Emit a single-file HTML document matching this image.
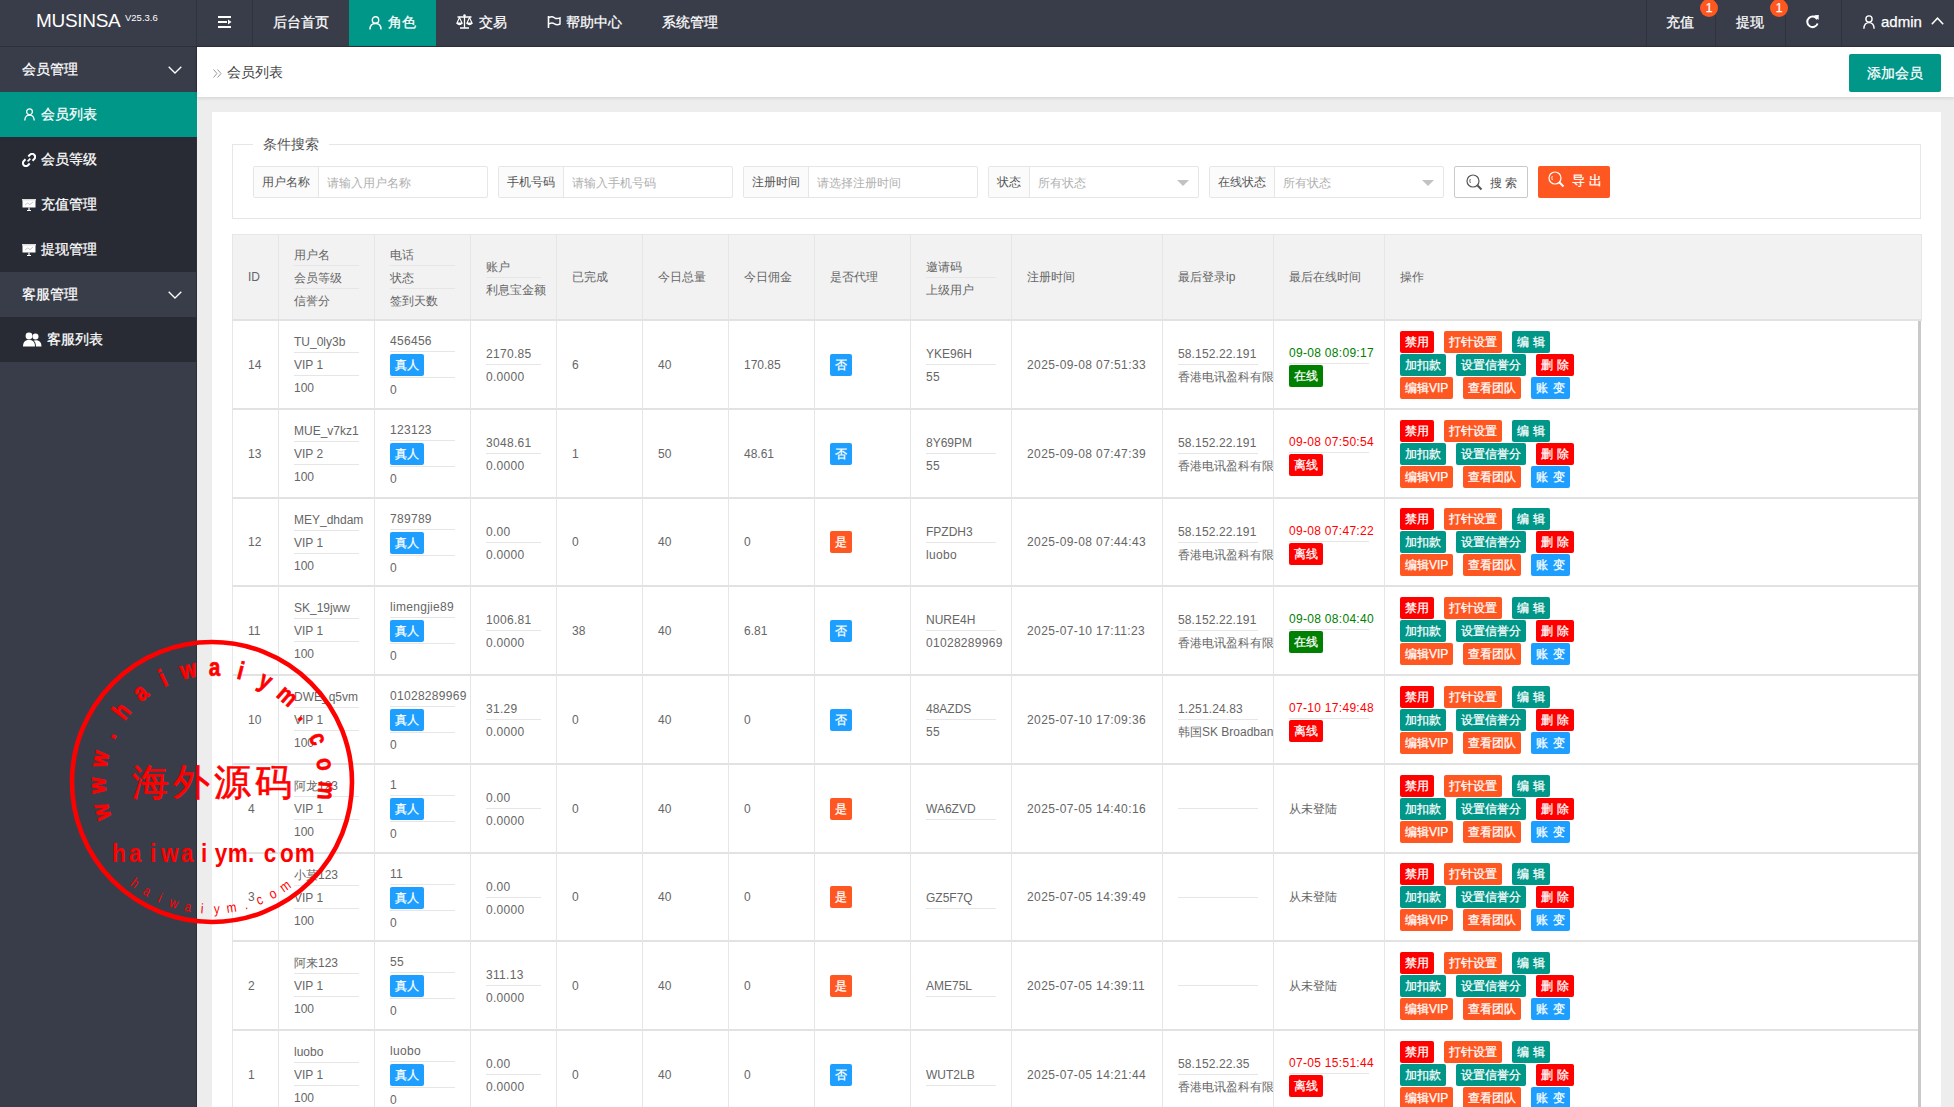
<!DOCTYPE html>
<html><head><meta charset="utf-8"><title>会员列表</title>
<style>
*{margin:0;padding:0;box-sizing:border-box}
html,body{width:1954px;height:1107px;overflow:hidden}
body{position:relative;background:#ededed;font-family:"Liberation Sans",sans-serif;color:#666;font-size:12px}
i{font-style:normal}
.hd{position:absolute;left:0;top:0;width:1954px;height:47px;background:#393d49;border-bottom:1px solid #2d3039}
.logo{position:absolute;left:0;top:0;width:197px;height:46px;border-right:1px solid #30333c;color:#fff}
.logo .t{position:absolute;left:36px;top:10px;font-size:19px;line-height:22px;letter-spacing:-0.3px}
.logo .v{position:absolute;left:125px;top:12px;font-size:9.5px;line-height:12px}
.nv{position:absolute;top:0;height:46px;color:#fff;font-size:14px;line-height:46px;white-space:nowrap}
.nv svg{position:absolute}
.nv .tx{position:absolute;top:-1px}
.sep{position:absolute;top:0;width:1px;height:46px;background:#30333c}
.badge{position:absolute;width:18px;height:18px;border-radius:9px;background:#ff5722;color:#fff;font-size:12px;line-height:18px;text-align:center}
.side{position:absolute;left:0;top:47px;width:197px;height:1060px;background:#393d49;border-right:1px solid #2d3039}
.si{position:absolute;left:0;width:196px;height:45px;color:#fff;font-size:14px;line-height:45px}
.si.g{background:#393d49}
.si.c{background:#282b33}
.si.on{background:#009688;width:197px}
.si svg{position:absolute}
.si .tx{position:absolute;top:0}
.crumb{position:absolute;left:197px;top:47px;width:1757px;height:50px;background:#fff;box-shadow:0 1px 4px rgba(0,0,0,.12)}
.crumb .tx{position:absolute;left:30px;top:0;line-height:50px;font-size:14px;color:#444}
.addbtn{position:absolute;left:1849px;top:54px;width:92px;height:38px;background:#009688;color:#fff;font-size:14px;line-height:38px;text-align:center;border-radius:2px}
.card{position:absolute;left:212px;top:112px;width:1729px;height:1000px;background:#fff}
.fs{position:absolute;left:232px;top:144px;width:1689px;height:75px;border:1px solid #e6e6e6}
.lg{position:absolute;left:253px;top:135px;padding:0 10px;background:#fff;font-size:14px;line-height:18px;color:#555}
.ig{position:absolute;top:166px;height:32px;border:1px solid #e6e6e6;border-radius:2px;background:#fff}
.ig .lb{position:absolute;left:0;top:0;height:30px;background:#fbfbfb;border-right:1px solid #e6e6e6;color:#555;font-size:12px;line-height:31px;padding-left:8px}
.ig .ph{position:absolute;top:1px;color:#b0b0b0;font-size:12px;line-height:30px}
.ig .arr{position:absolute;top:13px;width:0;height:0;border-left:6px solid transparent;border-right:6px solid transparent;border-top:6px solid #c2c2c2}
.sbtn{position:absolute;left:1454px;top:166px;width:74px;height:32px;border:1px solid #c9c9c9;border-radius:2px;background:#fff;color:#555;font-size:12px;line-height:30px}
.ebtn{position:absolute;left:1538px;top:166px;width:72px;height:32px;border-radius:2px;background:#ff5722;color:#fff;font-size:12px;line-height:30px}
table{position:absolute;left:232px;top:234px;width:1690px;border-collapse:separate;border-spacing:0;table-layout:fixed;border-top:1px solid #e6e6e6}
th,td{border-left:1px solid #e6e6e6;border-bottom:2px solid #e2e2e2;padding:0 15px;text-align:left;vertical-align:middle;font-weight:normal;color:#666;font-size:12px;line-height:22px;white-space:nowrap;overflow:hidden}
th{background:#f2f2f2;height:86px}
th.last{border-right:1px solid #e6e6e6}
td{height:auto;background:#fff}
td.last{border-right:none}
p{line-height:22px;height:22px;padding-top:1px}
p.s{border-bottom:1px solid #e6e6e6;height:23px}
p.t{height:23px}
p.e{height:0;line-height:0;padding:0}
p.s.e{height:1px}
p.pb{height:26px;padding-top:2px}
p.pb2{height:24px;padding-top:1px}
.tag{display:block;width:34px;height:22px;line-height:22px;text-align:center;color:#fff;border-radius:2px;font-size:12px}
.blue{background:#1e9fff}
.green{background:#008000}
.red{background:#ff0000}
.orange{background:#ff5722}
.sq{display:block;width:22px;height:22px;line-height:22px;text-align:center;color:#fff;border-radius:2px;font-size:12px}
.ls4{letter-spacing:.4px}
.ls3{letter-spacing:.3px}
.ls1{letter-spacing:.13px}
.gt{color:#008000}
.rt{color:#ff0000}
.ops{line-height:23px;height:68px;padding-top:0}
.b{display:inline-block;word-spacing:1px;height:22px;line-height:22px;padding:0 5px;color:#fff;border-radius:2px;font-size:12px;margin-left:10px;vertical-align:top}
.b.f,.ops br+.b{margin-left:0}
.ops .b:first-child{margin-left:0}
.b.r{background:#ff0000}
.b.o{background:#ff5722}
.b.g{background:#009688}
.b.bl{background:#1e9fff}
.rline{position:absolute;left:1918px;top:321px;width:3px;height:786px;background:#c9c9c9;box-shadow:1px 0 0 #fff}
.wm{position:absolute;left:0;top:0}
.b,.tag,.sq,.si,.nv,.addbtn,.ebtn,.badge{-webkit-text-stroke:0.25px #fff}
</style></head>
<body>
<div class="hd">
  <div class="logo"><span class="t">MUSINSA</span><span class="v">V25.3.6</span></div>
  <!-- toggle -->
  <div class="sep" style="left:252px"></div>
  <div class="nv" style="left:197px;width:55px">
    <svg style="left:21px;top:16px" width="14" height="12" viewBox="0 0 14 12"><rect x="0" y="0" width="13" height="2" fill="#fff"/><rect x="0" y="5" width="9" height="2" fill="#fff"/><rect x="0" y="10" width="13" height="2" fill="#fff"/><path d="M10 3.5 L13.5 6 L10 8.5Z" fill="#fff"/></svg>
  </div>
  <div class="nv" style="left:253px;width:96px"><span class="tx" style="left:20px">后台首页</span></div>
  <div class="nv" style="left:349px;width:87px;background:#009688">
    <svg style="left:20px;top:16px" width="13" height="14" viewBox="0 0 13 14"><circle cx="6.5" cy="4" r="3.2" fill="none" stroke="#fff" stroke-width="1.4"/><path d="M1 13.5 C1 9.5 3.5 7.5 6.5 7.5 C9.5 7.5 12 9.5 12 13.5" fill="none" stroke="#fff" stroke-width="1.4"/></svg>
    <span class="tx" style="left:39px">角色</span></div>
  <div class="nv" style="left:436px;width:91px">
    <svg style="left:20px;top:14px" width="17" height="15" viewBox="0 0 17 15"><path d="M8.5 1 V13.5 M4 14 H13 M1.5 3 H15.5" stroke="#fff" stroke-width="1.3" fill="none"/><circle cx="8.5" cy="1.5" r="1.2" fill="#fff"/><path d="M3.5 3.5 L1 9 H6 Z M13.5 3.5 L11 9 H16 Z" stroke="#fff" stroke-width="1.1" fill="none"/><path d="M0.8 9 Q3.5 12 6.2 9 M10.8 9 Q13.5 12 16.2 9" stroke="#fff" stroke-width="1.3" fill="#fff"/></svg>
    <span class="tx" style="left:43px">交易</span></div>
  <div class="nv" style="left:527px;width:115px">
    <svg style="left:20px;top:15px" width="14" height="15" viewBox="0 0 14 15"><path d="M1.5 1 V13" stroke="#fff" stroke-width="1.6"/><path d="M2 2.5 Q5 1 7.5 2.8 Q10 4.3 13 2.8 V9 Q10 10.5 7.5 8.8 Q5 7.2 2 8.8" fill="none" stroke="#fff" stroke-width="1.4"/></svg>
    <span class="tx" style="left:39px">帮助中心</span></div>
  <div class="nv" style="left:642px;width:96px"><span class="tx" style="left:20px">系统管理</span></div>

  <div class="sep" style="left:1646px"></div>
  <div class="sep" style="left:1715px"></div>
  <div class="sep" style="left:1785px"></div>
  <div class="sep" style="left:1841px"></div>
  <div class="nv" style="left:1647px;width:68px"><span class="tx" style="left:19px">充值</span></div>
  <div class="badge" style="left:1700px;top:-1px">1</div>
  <div class="nv" style="left:1716px;width:69px"><span class="tx" style="left:20px">提现</span></div>
  <div class="badge" style="left:1770px;top:-1px">1</div>
  <div class="nv" style="left:1786px;width:55px">
    <svg style="left:19px;top:14px" width="15" height="15" viewBox="0 0 15 15"><path d="M12.2 5.2 A5.3 5.3 0 1 0 12.6 9.5" fill="none" stroke="#fff" stroke-width="2"/><path d="M9 1.2 L13.8 1 L13.6 6 Z" fill="#fff"/></svg>
  </div>
  <div class="nv" style="left:1842px;width:112px">
    <svg style="left:21px;top:15px" width="12" height="14" viewBox="0 0 12 14"><circle cx="6" cy="4" r="3.1" fill="none" stroke="#fff" stroke-width="1.4"/><path d="M0.9 13.8 C0.9 9.5 3.2 7.6 6 7.6 C8.8 7.6 11.1 9.5 11.1 13.8" fill="none" stroke="#fff" stroke-width="1.4"/></svg>
    <span class="tx" style="left:39px;font-size:15px">admin</span>
    <svg style="left:89px;top:17px" width="13" height="8" viewBox="0 0 13 8"><path d="M0.8 7.2 L6.5 1.2 L12.2 7.2" fill="none" stroke="#fff" stroke-width="1.5"/></svg>
  </div>
</div>

<div class="side">
  <div class="si g" style="top:0"><span class="tx" style="left:22px">会员管理</span>
    <svg style="left:168px;top:19px" width="14" height="8" viewBox="0 0 14 8"><path d="M0.7 0.7 L7 7 L13.3 0.7" fill="none" stroke="#fff" stroke-width="1.3"/></svg></div>
  <div class="si on" style="top:45px">
    <svg style="left:24px;top:16px" width="11" height="13" viewBox="0 0 11 13"><circle cx="5.5" cy="3.8" r="2.9" fill="none" stroke="#fff" stroke-width="1.3"/><path d="M0.8 12.6 C0.8 8.8 2.8 7.2 5.5 7.2 C8.2 7.2 10.2 8.8 10.2 12.6" fill="none" stroke="#fff" stroke-width="1.3"/></svg>
    <span class="tx" style="left:41px">会员列表</span></div>
  <div class="si c" style="top:90px">
    <svg style="left:22px;top:16px" width="14" height="14" viewBox="0 0 14 14"><path d="M5.6 8.4 L8.4 5.6" stroke="#fff" stroke-width="1.6"/><path d="M6.3 3.5 L8 1.8 A2.3 2.3 0 0 1 12.2 6 L10.5 7.7" fill="none" stroke="#fff" stroke-width="2"/><path d="M7.7 10.5 L6 12.2 A2.3 2.3 0 0 1 1.8 8 L3.5 6.3" fill="none" stroke="#fff" stroke-width="2"/></svg>
    <span class="tx" style="left:41px">会员等级</span></div>
  <div class="si c" style="top:135px">
    <svg style="left:22px;top:17px" width="14" height="12" viewBox="0 0 14 12"><rect x="0.5" y="1" width="13" height="7.5" fill="#fff"/><rect x="0" y="0" width="14" height="1.5" fill="#ddd"/><path d="M7 8.5 V11.5 M5 11.5 H9" stroke="#fff" stroke-width="1.2"/><path d="M3 6 L5.5 4 L8 5.5 L11 3" stroke="#aaa" stroke-width="0.7" fill="none"/></svg>
    <span class="tx" style="left:41px">充值管理</span></div>
  <div class="si c" style="top:180px">
    <svg style="left:22px;top:17px" width="14" height="12" viewBox="0 0 14 12"><rect x="0.5" y="1" width="13" height="7.5" fill="#fff"/><rect x="0" y="0" width="14" height="1.5" fill="#ddd"/><path d="M7 8.5 V11.5 M5 11.5 H9" stroke="#fff" stroke-width="1.2"/><path d="M3 6 L5.5 4 L8 5.5 L11 3" stroke="#aaa" stroke-width="0.7" fill="none"/></svg>
    <span class="tx" style="left:41px">提现管理</span></div>
  <div class="si g" style="top:225px"><span class="tx" style="left:22px">客服管理</span>
    <svg style="left:168px;top:19px" width="14" height="8" viewBox="0 0 14 8"><path d="M0.7 0.7 L7 7 L13.3 0.7" fill="none" stroke="#fff" stroke-width="1.3"/></svg></div>
  <div class="si c" style="top:270px">
    <svg style="left:23px;top:15px" width="19" height="15" viewBox="0 0 19 15"><circle cx="6" cy="4" r="3.4" fill="#fff"/><path d="M0 14.5 C0 9.5 2.5 8 6 8 C9.5 8 12 9.5 12 14.5 Z" fill="#fff"/><circle cx="12.5" cy="4.5" r="3" fill="#fff"/><path d="M12.5 8.3 C16 8.3 18.5 10 18.5 14.5 H13 C13 11.5 12 9.5 10.5 8.8" fill="#fff"/></svg>
    <span class="tx" style="left:47px">客服列表</span></div>
</div>

<div class="crumb">
  <svg style="position:absolute;left:16px;top:22px" width="9" height="9" viewBox="0 0 9 9"><path d="M0.5 0.5 L4 4.5 L0.5 8.5 M4.5 0.5 L8 4.5 L4.5 8.5" fill="none" stroke="#999" stroke-width="1"/></svg>
  <span class="tx">会员列表</span>
</div>
<div class="addbtn">添加会员</div>

<div class="card"></div>
<div class="fs"></div>
<div class="lg">条件搜索</div>

<div class="ig" style="left:253px;width:235px"><span class="lb" style="width:65px">用户名称</span><span class="ph" style="left:73px">请输入用户名称</span></div>
<div class="ig" style="left:498px;width:235px"><span class="lb" style="width:65px">手机号码</span><span class="ph" style="left:73px">请输入手机号码</span></div>
<div class="ig" style="left:743px;width:235px"><span class="lb" style="width:65px">注册时间</span><span class="ph" style="left:73px">请选择注册时间</span></div>
<div class="ig" style="left:988px;width:211px"><span class="lb" style="width:41px">状态</span><span class="ph" style="left:49px">所有状态</span><span class="arr" style="left:188px"></span></div>
<div class="ig" style="left:1209px;width:235px"><span class="lb" style="width:65px">在线状态</span><span class="ph" style="left:73px">所有状态</span><span class="arr" style="left:212px"></span></div>
<div class="sbtn">
  <svg style="position:absolute;left:11px;top:7px" width="17" height="17" viewBox="0 0 17 17"><circle cx="7" cy="7" r="6" fill="none" stroke="#555" stroke-width="1.2"/><path d="M11.3 11.3 L15.5 15.5" stroke="#555" stroke-width="2"/><path d="M4.3 5 A3.5 3.5 0 0 0 4.5 9" fill="none" stroke="#555" stroke-width="0.9"/></svg>
  <span style="position:absolute;left:35px;top:1px">搜 索</span>
</div>
<div class="ebtn">
  <svg style="position:absolute;left:10px;top:5px" width="17" height="17" viewBox="0 0 17 17"><circle cx="7" cy="7" r="6" fill="none" stroke="#fff" stroke-width="1.2"/><path d="M11.3 11.3 L15.5 15.5" stroke="#fff" stroke-width="2"/><path d="M4.3 5 A3.5 3.5 0 0 0 4.5 9" fill="none" stroke="#fff" stroke-width="0.9"/></svg>
  <span style="position:absolute;left:34px;top:0px;font-size:13px">导 出</span>
</div>

<table>
<colgroup><col style="width:46px"><col style="width:96px"><col style="width:96px"><col style="width:86px"><col style="width:86px"><col style="width:86px"><col style="width:86px"><col style="width:96px"><col style="width:101px"><col style="width:151px"><col style="width:111px"><col style="width:111px"><col style="width:538px"></colgroup>
<thead><tr>
<th>ID</th>
<th><p class="s">用户名</p><p class="s">会员等级</p><p>信誉分</p></th>
<th><p class="s">电话</p><p class="s">状态</p><p>签到天数</p></th>
<th><p class="s">账户</p><p>利息宝金额</p></th>
<th>已完成</th><th>今日总量</th><th>今日佣金</th><th>是否代理</th>
<th><p class="s">邀请码</p><p>上级用户</p></th>
<th>注册时间</th><th>最后登录ip</th><th>最后在线时间</th><th class="last">操作</th>
</tr></thead>
<tbody>
<tr style="height:89px"><td>14</td><td><p class="s">TU_0ly3b</p><p class="s">VIP 1</p><p class="t">100</p></td><td><div class="ph"><p class="s ls3">456456</p><p class="s pb"><i class="tag blue">真人</i></p><p>0</p></div></td><td class="ls3"><p class="s">2170.85</p><p>0.0000</p></td><td>6</td><td>40</td><td>170.85</td><td><i class="sq blue">否</i></td><td><p class="s">YKE96H</p><p class="ls3">55</p></td><td class="ls4">2025-09-08 07:51:33</td><td class="clip"><p class="s ls1">58.152.22.191</p><p class="nw">香港电讯盈科有限公司</p></td><td><p class="s gt ls3">09-08 08:09:17</p><p class="pb2"><i class="tag green">在线</i></p></td><td class="last"><div class="ops"><i class="b r">禁用</i><i class="b o">打针设置</i><i class="b g">编 辑</i><br><i class="b g f">加扣款</i><i class="b g">设置信誉分</i><i class="b r">删 除</i><br><i class="b o f">编辑VIP</i><i class="b o">查看团队</i><i class="b bl">账 变</i></div></td></tr>
<tr style="height:89px"><td>13</td><td><p class="s">MUE_v7kz1</p><p class="s">VIP 2</p><p class="t">100</p></td><td><div class="ph"><p class="s ls3">123123</p><p class="s pb"><i class="tag blue">真人</i></p><p>0</p></div></td><td class="ls3"><p class="s">3048.61</p><p>0.0000</p></td><td>1</td><td>50</td><td>48.61</td><td><i class="sq blue">否</i></td><td><p class="s">8Y69PM</p><p class="ls3">55</p></td><td class="ls4">2025-09-08 07:47:39</td><td class="clip"><p class="s ls1">58.152.22.191</p><p class="nw">香港电讯盈科有限公司</p></td><td><p class="s rt ls3">09-08 07:50:54</p><p class="pb2"><i class="tag red">离线</i></p></td><td class="last"><div class="ops"><i class="b r">禁用</i><i class="b o">打针设置</i><i class="b g">编 辑</i><br><i class="b g f">加扣款</i><i class="b g">设置信誉分</i><i class="b r">删 除</i><br><i class="b o f">编辑VIP</i><i class="b o">查看团队</i><i class="b bl">账 变</i></div></td></tr>
<tr style="height:88px"><td>12</td><td><p class="s">MEY_dhdam</p><p class="s">VIP 1</p><p class="t">100</p></td><td><div class="ph"><p class="s ls3">789789</p><p class="s pb"><i class="tag blue">真人</i></p><p>0</p></div></td><td class="ls3"><p class="s">0.00</p><p>0.0000</p></td><td>0</td><td>40</td><td>0</td><td><i class="sq orange">是</i></td><td><p class="s">FPZDH3</p><p class="ls3">luobo</p></td><td class="ls4">2025-09-08 07:44:43</td><td class="clip"><p class="s ls1">58.152.22.191</p><p class="nw">香港电讯盈科有限公司</p></td><td><p class="s rt ls3">09-08 07:47:22</p><p class="pb2"><i class="tag red">离线</i></p></td><td class="last"><div class="ops"><i class="b r">禁用</i><i class="b o">打针设置</i><i class="b g">编 辑</i><br><i class="b g f">加扣款</i><i class="b g">设置信誉分</i><i class="b r">删 除</i><br><i class="b o f">编辑VIP</i><i class="b o">查看团队</i><i class="b bl">账 变</i></div></td></tr>
<tr style="height:89px"><td>11</td><td><p class="s">SK_19jww</p><p class="s">VIP 1</p><p class="t">100</p></td><td><div class="ph"><p class="s ls3">limengjie89</p><p class="s pb"><i class="tag blue">真人</i></p><p>0</p></div></td><td class="ls3"><p class="s">1006.81</p><p>0.0000</p></td><td>38</td><td>40</td><td>6.81</td><td><i class="sq blue">否</i></td><td><p class="s">NURE4H</p><p class="ls3">01028289969</p></td><td class="ls4">2025-07-10 17:11:23</td><td class="clip"><p class="s ls1">58.152.22.191</p><p class="nw">香港电讯盈科有限公司</p></td><td><p class="s gt ls3">09-08 08:04:40</p><p class="pb2"><i class="tag green">在线</i></p></td><td class="last"><div class="ops"><i class="b r">禁用</i><i class="b o">打针设置</i><i class="b g">编 辑</i><br><i class="b g f">加扣款</i><i class="b g">设置信誉分</i><i class="b r">删 除</i><br><i class="b o f">编辑VIP</i><i class="b o">查看团队</i><i class="b bl">账 变</i></div></td></tr>
<tr style="height:89px"><td>10</td><td><p class="s">DWE_q5vm</p><p class="s">VIP 1</p><p class="t">100</p></td><td><div class="ph"><p class="s ls3">01028289969</p><p class="s pb"><i class="tag blue">真人</i></p><p>0</p></div></td><td class="ls3"><p class="s">31.29</p><p>0.0000</p></td><td>0</td><td>40</td><td>0</td><td><i class="sq blue">否</i></td><td><p class="s">48AZDS</p><p class="ls3">55</p></td><td class="ls4">2025-07-10 17:09:36</td><td class="clip"><p class="s ls1">1.251.24.83</p><p class="nw">韩国SK Broadband</p></td><td><p class="s rt ls3">07-10 17:49:48</p><p class="pb2"><i class="tag red">离线</i></p></td><td class="last"><div class="ops"><i class="b r">禁用</i><i class="b o">打针设置</i><i class="b g">编 辑</i><br><i class="b g f">加扣款</i><i class="b g">设置信誉分</i><i class="b r">删 除</i><br><i class="b o f">编辑VIP</i><i class="b o">查看团队</i><i class="b bl">账 变</i></div></td></tr>
<tr style="height:89px"><td>4</td><td><p class="s">阿龙123</p><p class="s">VIP 1</p><p class="t">100</p></td><td><div class="ph"><p class="s ls3">1</p><p class="s pb"><i class="tag blue">真人</i></p><p>0</p></div></td><td class="ls3"><p class="s">0.00</p><p>0.0000</p></td><td>0</td><td>40</td><td>0</td><td><i class="sq orange">是</i></td><td><p class="s">WA6ZVD</p></td><td class="ls4">2025-07-05 14:40:16</td><td class="clip"><p class="s e"></p><p class="e"></p></td><td>从未登陆</td><td class="last"><div class="ops"><i class="b r">禁用</i><i class="b o">打针设置</i><i class="b g">编 辑</i><br><i class="b g f">加扣款</i><i class="b g">设置信誉分</i><i class="b r">删 除</i><br><i class="b o f">编辑VIP</i><i class="b o">查看团队</i><i class="b bl">账 变</i></div></td></tr>
<tr style="height:88px"><td>3</td><td><p class="s">小莫123</p><p class="s">VIP 1</p><p class="t">100</p></td><td><div class="ph"><p class="s ls3">11</p><p class="s pb"><i class="tag blue">真人</i></p><p>0</p></div></td><td class="ls3"><p class="s">0.00</p><p>0.0000</p></td><td>0</td><td>40</td><td>0</td><td><i class="sq orange">是</i></td><td><p class="s">GZ5F7Q</p></td><td class="ls4">2025-07-05 14:39:49</td><td class="clip"><p class="s e"></p><p class="e"></p></td><td>从未登陆</td><td class="last"><div class="ops"><i class="b r">禁用</i><i class="b o">打针设置</i><i class="b g">编 辑</i><br><i class="b g f">加扣款</i><i class="b g">设置信誉分</i><i class="b r">删 除</i><br><i class="b o f">编辑VIP</i><i class="b o">查看团队</i><i class="b bl">账 变</i></div></td></tr>
<tr style="height:89px"><td>2</td><td><p class="s">阿来123</p><p class="s">VIP 1</p><p class="t">100</p></td><td><div class="ph"><p class="s ls3">55</p><p class="s pb"><i class="tag blue">真人</i></p><p>0</p></div></td><td class="ls3"><p class="s">311.13</p><p>0.0000</p></td><td>0</td><td>40</td><td>0</td><td><i class="sq orange">是</i></td><td><p class="s">AME75L</p></td><td class="ls4">2025-07-05 14:39:11</td><td class="clip"><p class="s e"></p><p class="e"></p></td><td>从未登陆</td><td class="last"><div class="ops"><i class="b r">禁用</i><i class="b o">打针设置</i><i class="b g">编 辑</i><br><i class="b g f">加扣款</i><i class="b g">设置信誉分</i><i class="b r">删 除</i><br><i class="b o f">编辑VIP</i><i class="b o">查看团队</i><i class="b bl">账 变</i></div></td></tr>
<tr style="height:89px"><td>1</td><td><p class="s">luobo</p><p class="s">VIP 1</p><p class="t">100</p></td><td><div class="ph"><p class="s ls3">luobo</p><p class="s pb"><i class="tag blue">真人</i></p><p>0</p></div></td><td class="ls3"><p class="s">0.00</p><p>0.0000</p></td><td>0</td><td>40</td><td>0</td><td><i class="sq blue">否</i></td><td><p class="s">WUT2LB</p></td><td class="ls4">2025-07-05 14:21:44</td><td class="clip"><p class="s ls1">58.152.22.35</p><p class="nw">香港电讯盈科有限公司</p></td><td><p class="s rt ls3">07-05 15:51:44</p><p class="pb2"><i class="tag red">离线</i></p></td><td class="last"><div class="ops"><i class="b r">禁用</i><i class="b o">打针设置</i><i class="b g">编 辑</i><br><i class="b g f">加扣款</i><i class="b g">设置信誉分</i><i class="b r">删 除</i><br><i class="b o f">编辑VIP</i><i class="b o">查看团队</i><i class="b bl">账 变</i></div></td></tr>
</tbody>
</table>
<div class="rline"></div>

<svg class="wm" width="1954" height="1107" viewBox="0 0 1954 1107" style="position:absolute;left:0;top:0;pointer-events:none"><circle cx="212" cy="782" r="140" fill="none" stroke="#f00" stroke-width="4.6"/><text transform="translate(102.90,811.44) rotate(254.90) scale(0.82,1)" y="6.5" text-anchor="middle" font-family="Liberation Sans" font-weight="bold" font-size="25" fill="#f00" stroke="#f00" stroke-width="0.7">w</text><text transform="translate(99.06,785.55) rotate(268.20) scale(0.82,1)" y="6.5" text-anchor="middle" font-family="Liberation Sans" font-weight="bold" font-size="25" fill="#f00" stroke="#f00" stroke-width="0.7">w</text><text transform="translate(101.27,759.47) rotate(281.50) scale(0.82,1)" y="6.5" text-anchor="middle" font-family="Liberation Sans" font-weight="bold" font-size="25" fill="#f00" stroke="#f00" stroke-width="0.7">w</text><text transform="translate(109.42,734.60) rotate(294.80) scale(0.82,1)" y="6.5" text-anchor="middle" font-family="Liberation Sans" font-weight="bold" font-size="25" fill="#f00" stroke="#f00" stroke-width="0.7">.</text><text transform="translate(123.08,712.27) rotate(308.10) scale(0.82,1)" y="6.5" text-anchor="middle" font-family="Liberation Sans" font-weight="bold" font-size="25" fill="#f00" stroke="#f00" stroke-width="0.7">h</text><text transform="translate(141.50,693.69) rotate(321.40) scale(0.82,1)" y="6.5" text-anchor="middle" font-family="Liberation Sans" font-weight="bold" font-size="25" fill="#f00" stroke="#f00" stroke-width="0.7">a</text><text transform="translate(163.71,679.84) rotate(334.70) scale(0.82,1)" y="6.5" text-anchor="middle" font-family="Liberation Sans" font-weight="bold" font-size="25" fill="#f00" stroke="#f00" stroke-width="0.7">i</text><text transform="translate(188.51,671.47) rotate(348.00) scale(0.82,1)" y="6.5" text-anchor="middle" font-family="Liberation Sans" font-weight="bold" font-size="25" fill="#f00" stroke="#f00" stroke-width="0.7">w</text><text transform="translate(214.56,669.03) rotate(361.30) scale(0.82,1)" y="6.5" text-anchor="middle" font-family="Liberation Sans" font-weight="bold" font-size="25" fill="#f00" stroke="#f00" stroke-width="0.7">a</text><text transform="translate(240.48,672.65) rotate(374.60) scale(0.82,1)" y="6.5" text-anchor="middle" font-family="Liberation Sans" font-weight="bold" font-size="25" fill="#f00" stroke="#f00" stroke-width="0.7">i</text><text transform="translate(264.88,682.13) rotate(387.90) scale(0.82,1)" y="6.5" text-anchor="middle" font-family="Liberation Sans" font-weight="bold" font-size="25" fill="#f00" stroke="#f00" stroke-width="0.7">y</text><text transform="translate(286.43,696.98) rotate(401.20) scale(0.82,1)" y="6.5" text-anchor="middle" font-family="Liberation Sans" font-weight="bold" font-size="25" fill="#f00" stroke="#f00" stroke-width="0.7">m</text><text transform="translate(304.00,716.38) rotate(414.50) scale(0.82,1)" y="6.5" text-anchor="middle" font-family="Liberation Sans" font-weight="bold" font-size="25" fill="#f00" stroke="#f00" stroke-width="0.7">.</text><text transform="translate(316.62,739.30) rotate(427.80) scale(0.82,1)" y="6.5" text-anchor="middle" font-family="Liberation Sans" font-weight="bold" font-size="25" fill="#f00" stroke="#f00" stroke-width="0.7">c</text><text transform="translate(323.64,764.52) rotate(441.10) scale(0.82,1)" y="6.5" text-anchor="middle" font-family="Liberation Sans" font-weight="bold" font-size="25" fill="#f00" stroke="#f00" stroke-width="0.7">o</text><text transform="translate(324.67,790.67) rotate(454.40) scale(0.82,1)" y="6.5" text-anchor="middle" font-family="Liberation Sans" font-weight="bold" font-size="25" fill="#f00" stroke="#f00" stroke-width="0.7">m</text><text transform="translate(134.43,883.82) rotate(37.30) scale(0.85,1)" y="3.8" text-anchor="middle" font-family="Liberation Sans" font-size="14" fill="#f00">h</text><text transform="translate(146.62,892.04) rotate(30.72) scale(0.85,1)" y="3.8" text-anchor="middle" font-family="Liberation Sans" font-size="14" fill="#f00">a</text><text transform="translate(159.66,898.81) rotate(24.14) scale(0.85,1)" y="3.8" text-anchor="middle" font-family="Liberation Sans" font-size="14" fill="#f00">i</text><text transform="translate(173.39,904.04) rotate(17.55) scale(0.85,1)" y="3.8" text-anchor="middle" font-family="Liberation Sans" font-size="14" fill="#f00">w</text><text transform="translate(187.64,907.66) rotate(10.97) scale(0.85,1)" y="3.8" text-anchor="middle" font-family="Liberation Sans" font-size="14" fill="#f00">a</text><text transform="translate(202.20,909.62) rotate(4.39) scale(0.85,1)" y="3.8" text-anchor="middle" font-family="Liberation Sans" font-size="14" fill="#f00">i</text><text transform="translate(216.89,909.91) rotate(-2.19) scale(0.85,1)" y="3.8" text-anchor="middle" font-family="Liberation Sans" font-size="14" fill="#f00">y</text><text transform="translate(231.52,908.50) rotate(-8.77) scale(0.85,1)" y="3.8" text-anchor="middle" font-family="Liberation Sans" font-size="14" fill="#f00">m</text><text transform="translate(245.89,905.43) rotate(-15.35) scale(0.85,1)" y="3.8" text-anchor="middle" font-family="Liberation Sans" font-size="14" fill="#f00">.</text><text transform="translate(259.82,900.73) rotate(-21.94) scale(0.85,1)" y="3.8" text-anchor="middle" font-family="Liberation Sans" font-size="14" fill="#f00">c</text><text transform="translate(273.11,894.47) rotate(-28.52) scale(0.85,1)" y="3.8" text-anchor="middle" font-family="Liberation Sans" font-size="14" fill="#f00">o</text><text transform="translate(285.60,886.72) rotate(-35.10) scale(0.85,1)" y="3.8" text-anchor="middle" font-family="Liberation Sans" font-size="14" fill="#f00">m</text><text transform="translate(118.8,861.8) scale(0.9,1)" text-anchor="middle" font-family="Liberation Sans" font-weight="bold" font-size="25" fill="#f00">h</text><text transform="translate(134.9,861.8) scale(0.9,1)" text-anchor="middle" font-family="Liberation Sans" font-weight="bold" font-size="25" fill="#f00">a</text><text transform="translate(153,861.8) scale(0.9,1)" text-anchor="middle" font-family="Liberation Sans" font-weight="bold" font-size="25" fill="#f00">i</text><text transform="translate(169.7,861.8) scale(0.9,1)" text-anchor="middle" font-family="Liberation Sans" font-weight="bold" font-size="25" fill="#f00">w</text><text transform="translate(187.1,861.8) scale(0.9,1)" text-anchor="middle" font-family="Liberation Sans" font-weight="bold" font-size="25" fill="#f00">a</text><text transform="translate(204.2,861.8) scale(0.9,1)" text-anchor="middle" font-family="Liberation Sans" font-weight="bold" font-size="25" fill="#f00">i</text><text transform="translate(220.9,861.8) scale(0.9,1)" text-anchor="middle" font-family="Liberation Sans" font-weight="bold" font-size="25" fill="#f00">y</text><text transform="translate(237.7,861.8) scale(0.9,1)" text-anchor="middle" font-family="Liberation Sans" font-weight="bold" font-size="25" fill="#f00">m</text><text transform="translate(251.2,861.8) scale(0.9,1)" text-anchor="middle" font-family="Liberation Sans" font-weight="bold" font-size="25" fill="#f00">.</text><text transform="translate(270,861.8) scale(0.9,1)" text-anchor="middle" font-family="Liberation Sans" font-weight="bold" font-size="25" fill="#f00">c</text><text transform="translate(286.8,861.8) scale(0.9,1)" text-anchor="middle" font-family="Liberation Sans" font-weight="bold" font-size="25" fill="#f00">o</text><text transform="translate(304.8,861.8) scale(0.9,1)" text-anchor="middle" font-family="Liberation Sans" font-weight="bold" font-size="25" fill="#f00">m</text><text x="214" y="795" text-anchor="middle" font-family="Liberation Serif" font-size="37" fill="#f00" stroke="#f00" stroke-width="0.6" letter-spacing="4">海外源码</text></svg>
</body></html>
